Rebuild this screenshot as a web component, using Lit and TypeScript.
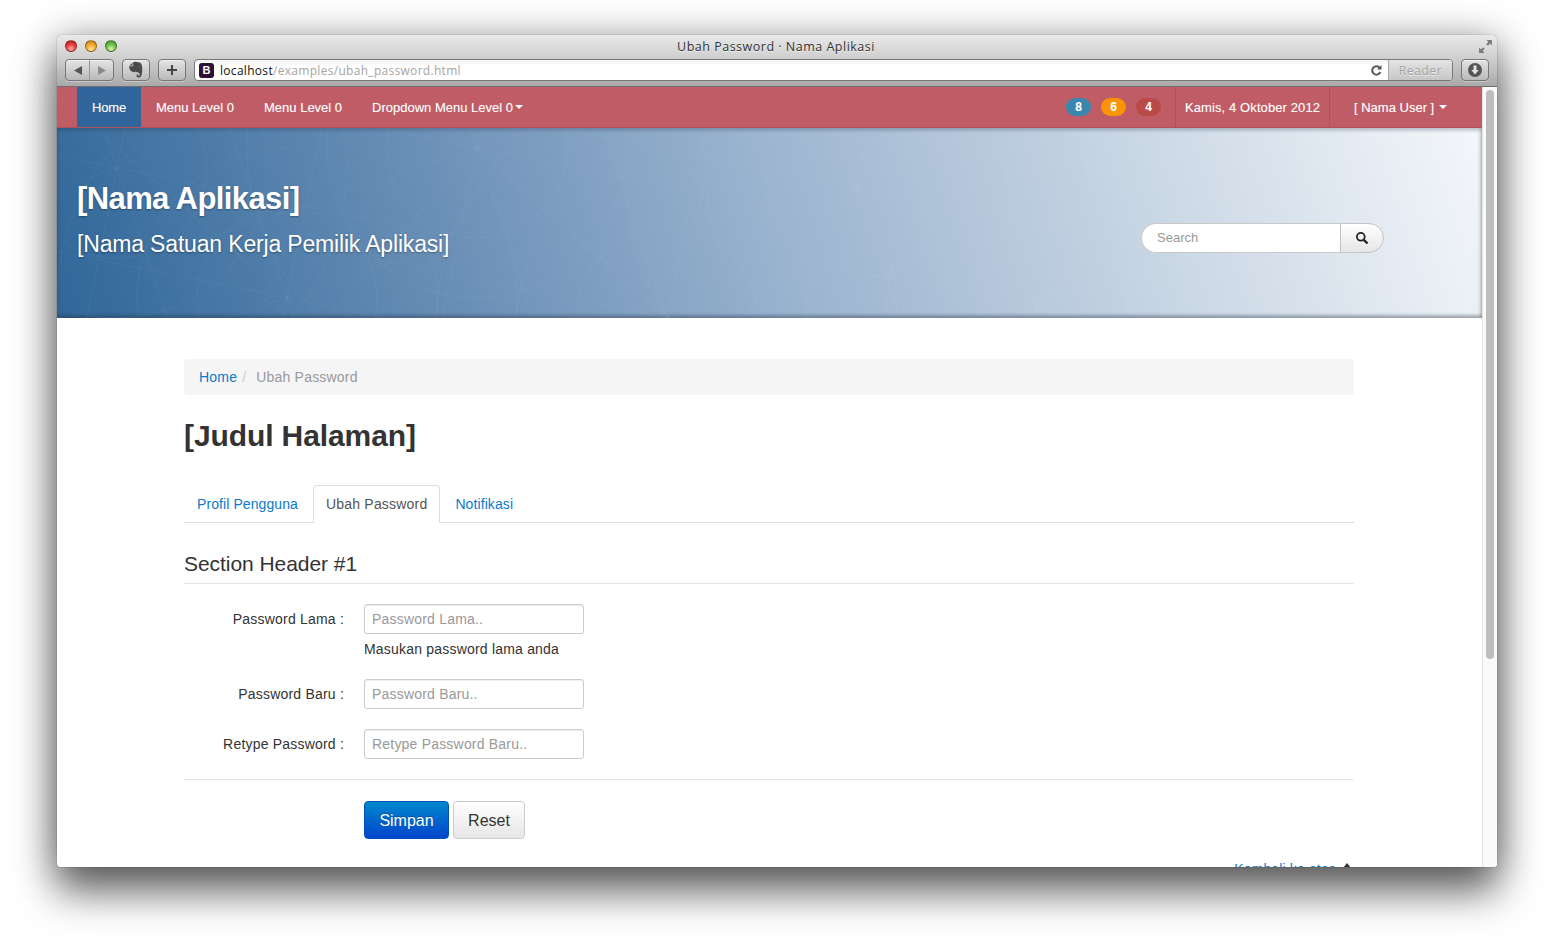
import { LitElement, html, css, svg } from 'lit';
import { customElement } from 'lit/decorators.js';

const fields = [
  { label: 'Password Lama :', hint: 'Password Lama..', help: 'Masukan password lama anda' },
  { label: 'Password Baru :', hint: 'Password Baru..' },
  { label: 'Retype Password :', hint: 'Retype Password Baru..' }
];

// faint arcs and rays behind the banner
const pattern = () => {
  const out = [];
  const centers = [[60, 40], [230, 170], [420, 20], [610, 190], [800, 60], [980, 180], [1180, 30]];
  for (const [x, y] of centers) {
    for (const r of [90, 150, 230]) {
      out.push(svg`<circle cx=${x} cy=${y} r=${r} />`);
    }
    for (let a = 0; a < 6; a++) {
      const t = (a * Math.PI) / 6 + 0.2;
      const dx = Math.cos(t) * 300;
      const dy = Math.sin(t) * 300;
      out.push(svg`<line x1=${x - dx} y1=${y - dy} x2=${x + dx} y2=${y + dy} />`);
    }
  }
  return out;
};

@customElement('app-root')
export class AppRoot extends LitElement {
  static styles = css`
    :host {
      display: block;
      width: 1554px;
      height: 946px;
      box-sizing: border-box;
      padding: 35px 57px 0;
      background: #fff;
      font-family: 'Liberation Sans', Arial, sans-serif;
      font-size: 14px;
      color: #333;
      overflow: hidden;
    }
    .window {
      width: 1440px;
      height: 832px;
      border-radius: 5px 5px 3px 3px;
      overflow: hidden;
      display: flex;
      flex-direction: column;
      background: #fff;
      box-shadow: 0 26px 40px rgba(0, 0, 0, 0.5), 0 5px 40px rgba(0, 0, 0, 0.4), 0 0 1px #555;
    }
    .chrome {
      height: 52px;
      flex: none;
      box-sizing: border-box;
      border-bottom: 1px solid #6f6f6f;
      background: linear-gradient(#e9e9e9, #cfcfcf 45%, #a9a9a9);
      display: flex;
      flex-direction: column;
    }
    .titlebar {
      height: 24px;
      box-sizing: border-box;
      display: flex;
      align-items: center;
      padding: 0 4px 2px 8px;
    }
    .lights { display: flex; gap: 8px; }
    .light {
      width: 12px;
      height: 12px;
      border-radius: 50%;
      box-sizing: border-box;
      border: 1px solid rgba(0, 0, 0, 0.35);
    }
    .light.red { background: radial-gradient(circle at 50% 80%, #ffb0a8, #ee3c3c 50%, #a81a1a); }
    .light.yellow { background: radial-gradient(circle at 50% 80%, #ffe79a, #f3a92c 50%, #b5741a); }
    .light.green { background: radial-gradient(circle at 50% 80%, #d8f7a8, #72c04a 50%, #3f8a2a); }
    .title {
      flex: 1;
      text-align: center;
      font-family: 'Open Sans', sans-serif;
      font-size: 12.5px;
      letter-spacing: 0.5px;
      color: #333;
      text-shadow: 0 1px 0 rgba(255, 255, 255, 0.6);
      padding-right: 43px;
    }
    .expand { width: 15px; height: 15px; flex: none; }
    .toolbar {
      height: 22px;
      display: flex;
      padding: 0 8px;
      gap: 8px;
    }
    .tbtn {
      height: 22px;
      box-sizing: border-box;
      border: 1px solid #777;
      border-radius: 4px;
      background: linear-gradient(#e4e4e4, #b9b9b9);
      box-shadow: inset 0 1px 0 rgba(255, 255, 255, 0.5), 0 1px 0 rgba(255, 255, 255, 0.3);
      display: flex;
      align-items: center;
      justify-content: center;
      flex: none;
      width: 28px;
    }
    .tbtn.nav { width: 49px; }
    .tbtn.nav span {
      flex: 1;
      height: 100%;
      display: flex;
      align-items: center;
      justify-content: center;
    }
    .tbtn.nav span + span { border-left: 1px solid #999; }
    .urlbar {
      flex: 1;
      height: 22px;
      box-sizing: border-box;
      border: 1px solid #777;
      border-radius: 4px;
      background: linear-gradient(#f4f4f4, #fff 30%);
      display: flex;
      align-items: center;
      padding-left: 4px;
      overflow: hidden;
    }
    .fav {
      width: 15px;
      height: 15px;
      border-radius: 3px;
      background: #2b1233;
      color: #fff;
      font-size: 11px;
      font-weight: bold;
      text-align: center;
      line-height: 15px;
      margin-right: 6px;
      flex: none;
    }
    .url {
      flex: 1;
      font-family: 'Open Sans', sans-serif;
      font-size: 12px;
      letter-spacing: 0.3px;
      color: #a5a5a5;
      white-space: nowrap;
    }
    .url b { font-weight: 400; color: #111; }
    .reload { width: 13px; height: 13px; margin-right: 5px; flex: none; }
    .reader {
      width: 64px;
      height: 100%;
      box-sizing: border-box;
      border-left: 1px solid #aaa;
      background: linear-gradient(#e4e4e4, #c6c6c6);
      color: #a3a3a3;
      font-family: 'Open Sans', sans-serif;
      font-size: 12px;
      letter-spacing: 0.6px;
      text-align: center;
      line-height: 21px;
      text-shadow: 0 1px 0 rgba(255, 255, 255, 0.6);
    }

    .viewport {
      flex: 1;
      display: flex;
      min-height: 0;
    }
    .page {
      flex: 1;
      min-width: 0;
      overflow: hidden;
    }
    .scrollbar {
      width: 15px;
      flex: none;
      box-sizing: border-box;
      border-left: 1px solid #e3e3e3;
      background: #fafafa;
      padding: 3px 3px 0 3px;
    }
    .thumb {
      height: 569px;
      border-radius: 5px;
      background: #bdbdbd;
    }

    .navbar {
      height: 41px;
      box-sizing: border-box;
      background: #c05c65;
      border-bottom: 1px solid #ad525a;
      padding-left: 20px;
      display: flex;
      align-items: stretch;
      color: #fff;
      font-size: 13px;
      text-shadow: 0 0 1px rgba(255, 255, 255, 0.3);
    }
    .navlink {
      padding: 0 15px;
      display: flex;
      align-items: center;
      white-space: nowrap;
    }
    .navlink.active { background: #2f659a; letter-spacing: -0.18px; }
    .caret {
      display: inline-block;
      width: 0;
      height: 0;
      border: 4px solid transparent;
      border-top-color: #fff;
      border-bottom: 0;
      margin-left: 2px;
    }
    .navright {
      margin-left: auto;
      display: flex;
      align-items: stretch;
    }
    .badges {
      display: flex;
      align-items: center;
      gap: 10px;
      padding-right: 14px;
    }
    .badge {
      width: 25px;
      height: 18px;
      border-radius: 9px;
      text-align: center;
      line-height: 18px;
      font-size: 12px;
      font-weight: bold;
    }
    .badge.info { background: #3a87ad; }
    .badge.warn { background: #f89406; }
    .badge.danger { background: #b94a48; }
    .date {
      border-left: 1px solid #ad525a;
      border-right: 1px solid #ad525a;
      padding: 0 9px;
      width: 135px;
      box-sizing: content-box;
      letter-spacing: 0.1px;
      display: flex;
      align-items: center;
      white-space: nowrap;
    }
    .user {
      width: 152px;
      box-sizing: border-box;
      padding-left: 24px;
      display: flex;
      align-items: center;
      white-space: nowrap;
    }
    .user .caret { margin-left: 5px; }

    .banner {
      height: 190px;
      box-sizing: border-box;
      padding: 53px 0 0 20px;
      position: relative;
      overflow: hidden;
      background: linear-gradient(72deg, #2f6699 0%, #6f93b9 30%, #9ab3cf 50%, #c2d1e1 72%, #f4f7fa 100%);
      box-shadow: inset 0 -3px 3px rgba(40, 50, 70, 0.35), inset 0 3px 3px rgba(40, 50, 70, 0.2), inset -3px 0 3px rgba(40, 50, 70, 0.12);
      color: #fff;
      text-shadow: 0 1px 2px rgba(0, 0, 0, 0.35);
      display: flex;
      justify-content: space-between;
    }
    .lines {
      position: absolute;
      inset: 0;
      width: 100%;
      height: 100%;
      fill: none;
      stroke: #fff;
      stroke-opacity: 0.045;
    }
    .brand { position: relative; }
    .brand h1 {
      margin: 0;
      font-size: 31px;
      line-height: 36px;
      font-weight: bold;
      letter-spacing: -0.6px;
    }
    .brand h2 {
      margin: 13px 0 0;
      font-size: 23px;
      line-height: 28px;
      font-weight: normal;
      letter-spacing: -0.17px;
    }
    .search {
      position: relative;
      display: flex;
      height: 30px;
      margin: 42px 98px 0 0;
      text-shadow: none;
    }
    .search input {
      width: 199px;
      height: 30px;
      box-sizing: border-box;
      border: 1px solid #c9c9c9;
      border-right: 0;
      border-radius: 15px 0 0 15px;
      padding: 0 15px 2px;
      font: 13px 'Liberation Sans', Arial, sans-serif;
      outline: none;
      background: #fff;
    }
    .search button {
      width: 44px;
      height: 30px;
      box-sizing: border-box;
      border: 1px solid #c4c4c4;
      border-radius: 0 15px 15px 0;
      background: linear-gradient(#fff, #e6e6e6);
      display: flex;
      align-items: center;
      justify-content: center;
      padding: 0;
    }
    input::placeholder { color: #999; opacity: 1; }

    .content {
      width: 1170px;
      margin: 41px 0 0 127px;
      letter-spacing: 0.2px;
    }
    .crumbs {
      height: 36px;
      box-sizing: border-box;
      padding: 0 15px;
      border-radius: 4px;
      background: #f5f5f5;
      display: flex;
      align-items: center;
      color: #999;
    }
    .crumbs i { font-style: normal; color: #ccc; padding: 0 5px; margin-right: 5px; }
    a { color: #0b7ac9; text-decoration: none; }
    h3.title-page {
      margin: 21px 0 0;
      font-size: 30px;
      line-height: 40px;
      font-weight: bold;
      color: #333;
      letter-spacing: -0.1px;
    }
    .tabs {
      margin-top: 29px;
      height: 38px;
      box-sizing: border-box;
      border-bottom: 1px solid #ddd;
      display: flex;
      gap: 2px;
    }
    .tab {
      height: 38px;
      box-sizing: border-box;
      padding: 0 12px;
      line-height: 37px;
      border: 1px solid transparent;
      border-radius: 4px 4px 0 0;
      letter-spacing: 0.09px;
    }
    .tab.on {
      color: #555;
      background: #fff;
      border-color: #ddd #ddd #fff;
      letter-spacing: 0.2px;
    }
    h4 {
      margin: 27px 0 0;
      height: 34px;
      box-sizing: border-box;
      border-bottom: 1px solid #e5e5e5;
      font-size: 21px;
      line-height: 27px;
      font-weight: normal;
      color: #333;
      letter-spacing: -0.05px;
    }
    form { margin: 20px 0 0; }
    .row {
      display: grid;
      grid-template-columns: 160px 220px;
      column-gap: 20px;
      margin-bottom: 20px;
    }
    .row label {
      text-align: right;
      line-height: 30px;
      white-space: nowrap;
    }
    .row input {
      width: 220px;
      height: 30px;
      box-sizing: border-box;
      border: 1px solid #ccc;
      border-radius: 3px;
      padding: 0 7px;
      font: 14px 'Liberation Sans', Arial, sans-serif;
      letter-spacing: 0.2px;
      box-shadow: inset 0 1px 1px rgba(0, 0, 0, 0.07);
      outline: none;
    }
    .help {
      grid-column: 2;
      margin-top: 5px;
      line-height: 20px;
      white-space: nowrap;
    }
    .actions {
      border-top: 1px solid #e5e5e5;
      padding: 21px 0 0 180px;
      display: flex;
      gap: 4px;
    }
    .btn {
      height: 38px;
      box-sizing: border-box;
      border-radius: 4px;
      font: 16px 'Liberation Sans', Arial, sans-serif;
      padding: 2px 0 0;
    }
    .btn.primary {
      width: 85px;
      color: #fff;
      border: 1px solid #0050b5;
      background: linear-gradient(#0088cc, #0044cc);
      text-shadow: 0 -1px 0 rgba(0, 0, 0, 0.25);
    }
    .btn.plain {
      width: 72px;
      color: #333;
      border: 1px solid #ccc;
      background: linear-gradient(#fff, #e6e6e6);
    }
    .top {
      margin-top: 22px;
      display: flex;
      justify-content: flex-end;
      align-items: flex-start;
      gap: 7px;
      padding-right: 3px;
      letter-spacing: 0.15px;
    }
    .up {
      width: 0;
      height: 0;
      margin-top: 2px;
      border: 4px solid transparent;
      border-bottom: 5px solid #333;
      border-top: 0;
    }
  `;

  render() {
    return html`
      <div class="window">
        <div class="chrome">
          <div class="titlebar">
            <div class="lights">
              <div class="light red"></div>
              <div class="light yellow"></div>
              <div class="light green"></div>
            </div>
            <div class="title">Ubah Password · Nama Aplikasi</div>
            <svg class="expand" viewBox="0 0 14 14" fill="#7a7a7a">
              <path d="M8 1h5v5l-1.7-1.7-2 2-1.6-1.6 2-2zM6 13H1V8l1.7 1.7 2-2 1.6 1.6-2 2z" />
            </svg>
          </div>
          <div class="toolbar">
            <div class="tbtn nav">
              <span><svg width="10" height="11" viewBox="0 0 10 11"><path d="M9 1v9L1 5.5z" fill="#555" /></svg></span>
              <span><svg width="10" height="11" viewBox="0 0 10 11"><path d="M1 1v9l8-4.5z" fill="#8b8b8b" /></svg></span>
            </div>
            <div class="tbtn">
              <svg width="16" height="18" viewBox="0 0 16 18" fill="#4a4a4a">
                <path d="M5 1.500C6.500.6 8.500.6 10 1.300c2.500.2 3.700 1.400 4 3.700.4 3 .4 7.500-.8 10-.8 1.700-3.500 2-4.500.6-.7-1-.2-2.400 1.200-2.400.5 0 .8.200.8.800l-1 .1c-.3.800.8 1.200 1.600.5.600-.8.400-2.100-.4-2.800-1.200-.2-2.600-.4-3.100-1.500-.5 1.300-2.200 1-3.500.5C2.600 10 1.500 8.500 1.300 6.500L1 5.300h3.300c.7 0 1-.4 1-1z" />
                <path d="M1.500 4.500L4.500 1.700v2.800z" />
                <path d="M10.500 5.500c.8-.2 1.500.2 1.700 1-.7-.3-1.200-.4-1.700-1z" fill="#ddd" />
              </svg>
            </div>
            <div class="tbtn">
              <svg width="12" height="12" viewBox="0 0 12 12"><path d="M5 1h2v4h4v2H7v4H5V7H1V5h4z" fill="#444" /></svg>
            </div>
            <div class="urlbar">
              <div class="fav">B</div>
              <div class="url"><b>localhost</b>/examples/ubah_password.html</div>
              <svg class="reload" viewBox="0 0 13 13" fill="none" stroke="#555" stroke-width="2">
                <path d="M10.300 8a4.200 4.200 0 1 1-.6-4.200" />
                <path d="M11.500 1v4.500H7z" fill="#555" stroke="none" />
              </svg>
              <div class="reader">Reader</div>
            </div>
            <div class="tbtn">
              <svg width="16" height="16" viewBox="0 0 16 16">
                <circle cx="8" cy="8" r="7" fill="#555" />
                <path d="M6.500 3.500h3V8h2.200L8 12.500 4.300 8h2.200z" fill="#e2e2e2" />
              </svg>
            </div>
          </div>
        </div>
        <div class="viewport">
          <div class="page">
            <div class="navbar">
              <div class="navlink active">Home</div>
              <div class="navlink">Menu Level 0</div>
              <div class="navlink">Menu Level 0</div>
              <div class="navlink">Dropdown Menu Level 0<span class="caret"></span></div>
              <div class="navright">
                <div class="badges">
                  <div class="badge info">8</div>
                  <div class="badge warn">6</div>
                  <div class="badge danger">4</div>
                </div>
                <div class="date">Kamis, 4 Oktober 2012</div>
                <div class="user">[ Nama User ]<span class="caret"></span></div>
              </div>
            </div>
            <div class="banner">
              <svg class="lines" viewBox="0 0 1425 190" preserveAspectRatio="none">${pattern()}</svg>
              <div class="brand">
                <h1>[Nama Aplikasi]</h1>
                <h2>[Nama Satuan Kerja Pemilik Aplikasi]</h2>
              </div>
              <div class="search">
                <input placeholder="Search" />
                <button aria-label="Search">
                  <svg width="14" height="14" viewBox="0 0 14 14" fill="none" stroke="#222">
                    <circle cx="5.800" cy="5.800" r="3.900" stroke-width="1.800" />
                    <path d="M8.800 8.800l3.700 3.700" stroke-width="2.400" />
                  </svg>
                </button>
              </div>
            </div>
            <div class="content">
              <div class="crumbs"><a href="#">Home</a><i>/</i>Ubah Password</div>
              <h3 class="title-page">[Judul Halaman]</h3>
              <div class="tabs">
                <a class="tab" href="#">Profil Pengguna</a>
                <div class="tab on">Ubah Password</div>
                <a class="tab" href="#">Notifikasi</a>
              </div>
              <h4>Section Header #1</h4>
              <form>
                ${fields.map(
                  (f) => html`
                    <div class="row">
                      <label>${f.label}</label>
                      <input type="password" placeholder=${f.hint} />
                      ${f.help ? html`<div class="help">${f.help}</div>` : ''}
                    </div>
                  `
                )}
                <div class="actions">
                  <button class="btn primary" type="button">Simpan</button>
                  <button class="btn plain" type="button">Reset</button>
                </div>
              </form>
              <div class="top"><a href="#">Kembali ke atas</a><span class="up"></span></div>
            </div>
          </div>
          <div class="scrollbar"><div class="thumb"></div></div>
        </div>
      </div>
    `;
  }
}
